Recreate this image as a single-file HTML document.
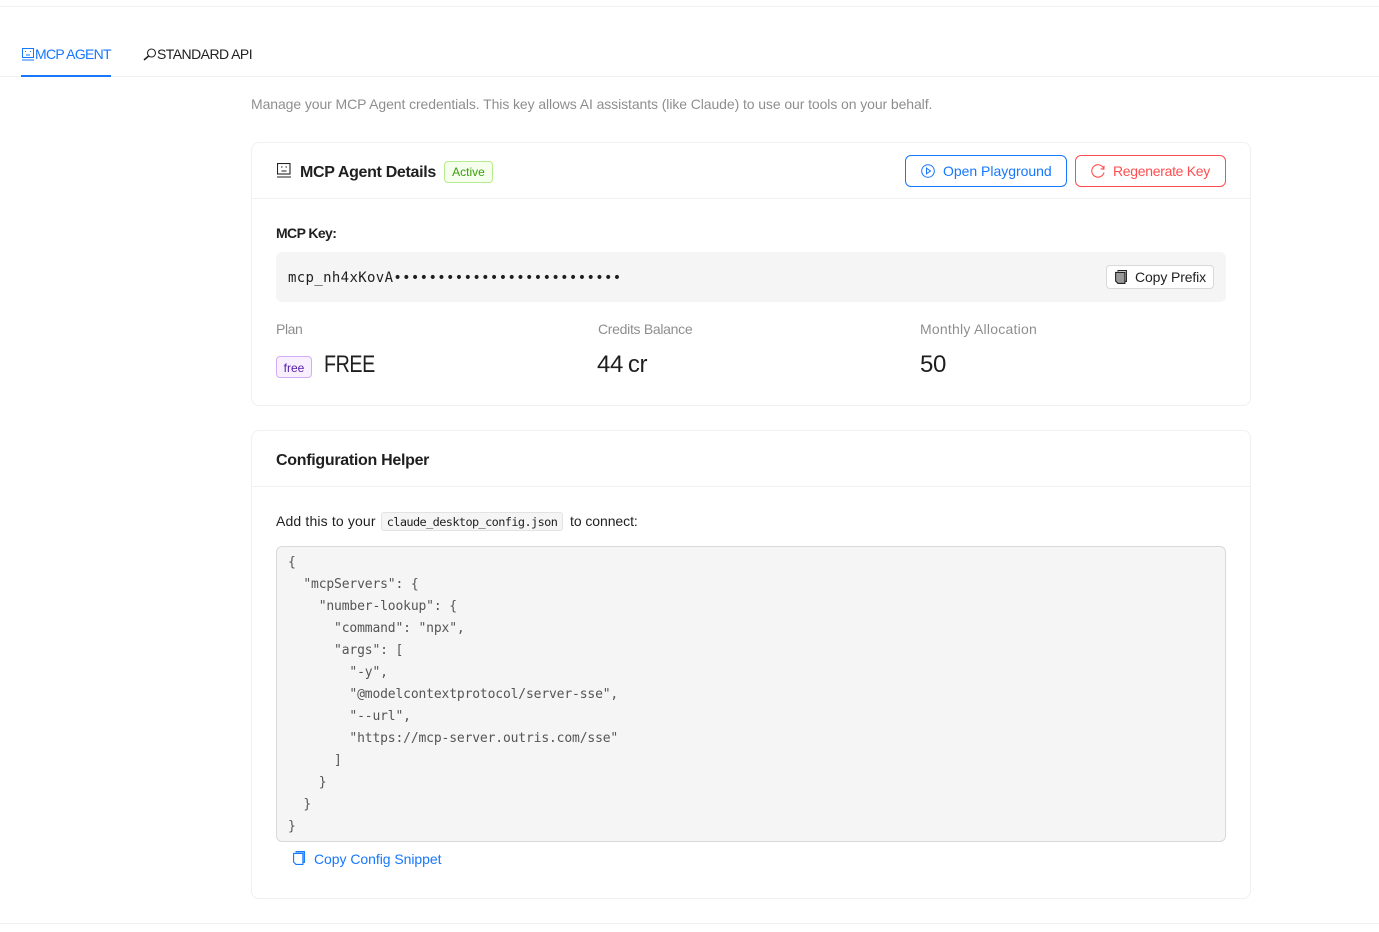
<!DOCTYPE html>
<html><head><meta charset="utf-8"><style>
*{box-sizing:border-box}
html,body{margin:0;padding:0;width:1379px;height:932px;overflow:hidden;background:#fff;font-family:"Liberation Sans","Noto Sans CJK SC",sans-serif;color:rgba(0,0,0,.88);font-size:14px}
.a{position:absolute;white-space:nowrap}
.l{position:absolute;background:#f0f0f0;height:1px}
.card{position:absolute;left:251px;width:1000px;border:1px solid #f0f0f0;border-radius:8px;background:#fff}
.t{line-height:20px}
.m{font-family:"DejaVu Sans Mono","Liberation Mono",monospace}
svg{position:absolute;display:block}
</style></head><body>
<div class="a" style="left:0;top:6px;width:1379px;height:1px;background:#f0f0f0"></div>
<div class="l" style="left:0;top:76px;width:1379px"></div>
<div class="a" style="left:21px;top:75px;width:90px;height:2px;background:#1677ff"></div>
<svg style="left:22px;top:48px" width="13" height="13" viewBox="0 0 13 13" fill="none" stroke="#1677ff"><rect x=".5" y=".5" width="11" height="9"/><path d="M0 12h12M3 3.5h1M8 3.5h1M4 7h4"/></svg>
<div class="a t" style="left:35px;top:44px;color:#1677ff;letter-spacing:-.7px">MCP AGENT</div>
<svg style="left:143px;top:48px" width="14" height="13" viewBox="0 0 14 13" fill="none" stroke="#222" stroke-width="1.1"><circle cx="8.5" cy="5" r="4"/><path d="M5.6 8L1 12" stroke-width="1.6"/></svg>
<div class="a t" style="left:157px;top:44px;letter-spacing:-.55px">STANDARD API</div>
<div class="a t" style="left:251px;top:94px;color:rgba(0,0,0,.45);letter-spacing:-.09px">Manage your MCP Agent credentials. This key allows AI assistants (like Claude) to use our tools on your behalf.</div>

<div class="card" style="top:142px;height:264px"></div>
<div class="l" style="left:252px;top:198px;width:998px"></div>
<svg style="left:277px;top:163px" width="14" height="15" viewBox="0 0 14 15" fill="none" stroke="#222" stroke-width="1.1"><rect x=".5" y=".5" width="12.5" height="10.5"/><path d="M0 14h14M4 4h1.5M8.5 4H10M4.5 8h5"/></svg>
<div class="a" style="left:300px;top:162px;font-size:16px;font-weight:700;line-height:22px;letter-spacing:-.32px;color:#1f1f1f">MCP Agent Details</div>
<div class="a" style="left:444px;top:161px;width:49px;height:22px;border:1px solid #b7eb8f;border-radius:4px;background:#f6ffed;color:#389e0d;font-size:12px;line-height:21px;text-align:center">Active</div>
<div class="a" style="left:905px;top:155px;width:162px;height:32px;border:1px solid #1677ff;border-radius:6px"></div>
<svg style="left:921px;top:164px" width="14" height="14" viewBox="0 0 14 14" fill="none" stroke="#1677ff"><circle cx="7" cy="7" r="6.3"/><path d="M5.5 4.2L9.5 7l-4 2.8z"/></svg>
<div class="a t" style="left:943px;top:161px;color:#1677ff;letter-spacing:-.02px">Open Playground</div>
<div class="a" style="left:1075px;top:155px;width:151px;height:32px;border:1px solid #ff4d4f;border-radius:6px"></div>
<svg style="left:1091px;top:164px" width="14" height="14" viewBox="0 0 14 14" fill="none" stroke="#ff4d4f" stroke-width="1.1"><path d="M12.6 4.3A6.2 6.2 0 1 0 13 8.5"/><path d="M9.6 4.8l3.3.3.1-3.4"/></svg>
<div class="a t" style="left:1113px;top:161px;color:#ff4d4f;letter-spacing:-.3px">Regenerate Key</div>
<div class="a t" style="left:276px;top:223px;font-weight:700;letter-spacing:-.6px">MCP Key:</div>
<div class="a" style="left:276px;top:252px;width:950px;height:50px;background:#f5f5f5;border-radius:6px"></div>
<div class="a m" style="left:288px;top:269px;font-size:14px;line-height:18px;letter-spacing:.35px;color:#1f1f1f">mcp_nh4xKovA••••••••••••••••••••••••••</div>
<div class="a" style="left:1106px;top:265px;width:108px;height:24px;background:#fff;border:1px solid #d9d9d9;border-radius:4px"></div>
<svg style="left:1115px;top:270px" width="12" height="14" viewBox="0 0 12 14" fill="none" stroke="#222" stroke-width="1.1"><path d="M3 1.5V.6h8.4v10.8h-1.3"/><path d="M.6 2.4h9.3v11H3L.6 11z" fill="#999"/></svg>
<div class="a t" style="left:1135px;top:267px;letter-spacing:-.12px">Copy Prefix</div>
<div class="a t" style="left:276px;top:319px;color:rgba(0,0,0,.45);letter-spacing:-.4px">Plan</div>
<div class="a t" style="left:598px;top:319px;color:rgba(0,0,0,.45);letter-spacing:-.3px">Credits Balance</div>
<div class="a t" style="left:920px;top:319px;color:rgba(0,0,0,.45);letter-spacing:.23px">Monthly Allocation</div>
<div class="a" style="left:276px;top:356px;width:36px;height:22px;border:1px solid #d3adf7;border-radius:4px;background:#f9f0ff;color:#531dab;font-size:12px;line-height:22px;text-align:center">free</div>
<div class="a" style="left:324px;top:349px;font-size:24px;line-height:32px;letter-spacing:-.5px;transform:scaleX(.82);transform-origin:left center">FREE</div>
<div class="a" style="left:597px;top:349px;font-size:24px;line-height:32px;letter-spacing:-.4px">44<span style="margin-left:5px">cr</span></div>
<div class="a" style="left:920px;top:349px;font-size:24px;line-height:32px;letter-spacing:-.3px">50</div>

<div class="card" style="top:430px;height:469px"></div>
<div class="l" style="left:252px;top:486px;width:998px"></div>
<div class="a" style="left:276px;top:450px;font-size:16px;font-weight:700;line-height:22px;letter-spacing:-.3px;color:#1f1f1f">Configuration Helper</div>
<div class="a t" style="left:276px;top:511px;letter-spacing:.15px">Add this to your</div>
<div class="a m" style="left:381px;top:512px;width:182px;height:19px;background:#f5f5f5;border:1px solid #e3e3e3;border-radius:3px;font-size:11.9px;line-height:18px;text-align:center;letter-spacing:-.6px;color:#1f1f1f">claude_desktop_config.json</div>
<div class="a t" style="left:570px;top:511px;letter-spacing:-.07px">to connect:</div>
<pre class="a m" style="white-space:pre;left:276px;top:546px;width:950px;height:296px;margin:0;padding:5px 11px;background:#f5f5f5;border:1px solid #d9d9d9;border-radius:6px;font-size:13px;line-height:22px;letter-spacing:-.15px;color:#555">{
  "mcpServers": {
    "number-lookup": {
      "command": "npx",
      "args": [
        "-y",
        "@modelcontextprotocol/server-sse",
        "--url",
        "https://mcp-server.outris.com/sse"
      ]
    }
  }
}</pre>
<svg style="left:293px;top:851px" width="12" height="14" viewBox="0 0 12 14" fill="none" stroke="#1677ff" stroke-width="1.1"><path d="M3 1.5V.6h8.4v10.8h-1.3" fill="#91caff"/><path d="M.6 2.4h9.3v11H3L.6 11z" fill="#fff"/></svg>
<div class="a t" style="left:314px;top:849px;color:#1677ff;letter-spacing:-.05px">Copy Config Snippet</div>
<div class="a" style="left:0;top:923px;width:1379px;height:1px;background:#f0f0f0"></div>
</body></html>
